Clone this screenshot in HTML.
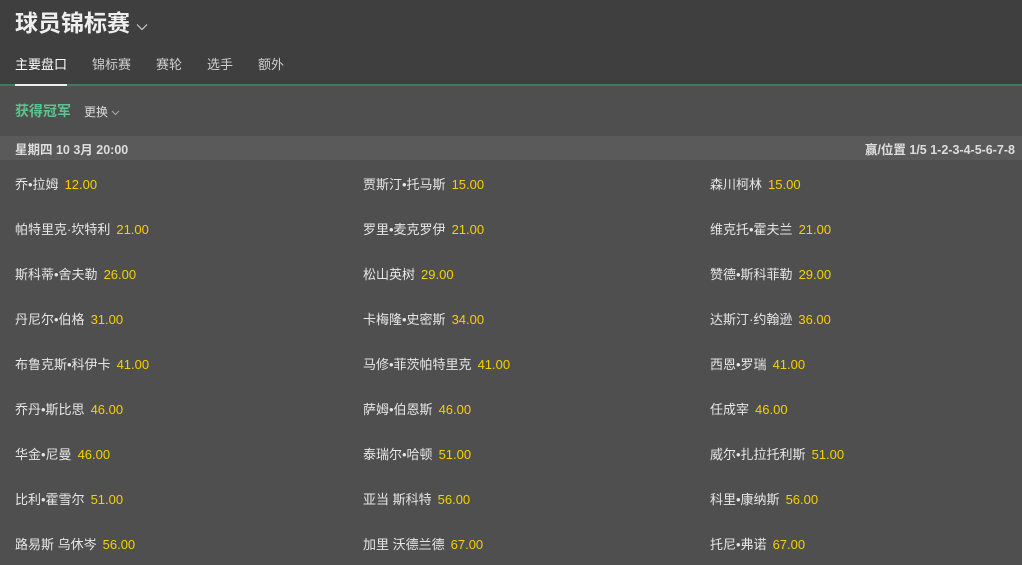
<!DOCTYPE html><html><head><meta charset="utf-8"><style>
body{margin:0;width:1022px;height:557px;overflow:hidden;background:#4f4f4f;font-family:"Liberation Sans","Noto Sans CJK SC",sans-serif;color:#e6e6e6}
.hd{background:#3f3f3f;height:84px;position:relative}
.t{position:absolute;left:15px;top:4px;font-size:23px;font-weight:bold;color:#eee}
.tabs{position:absolute;top:54px;left:15px;font-size:13px;color:#cfcfcf}
.tabs span{position:absolute;white-space:nowrap}
.line{height:2px;background:#3b7d62;position:relative}
.line i{position:absolute;left:15px;width:52px;height:2px;background:#eee;top:0}
.sub{height:50px;position:relative}
.g{position:absolute;left:15px;top:15px;font-size:14px;font-weight:bold;color:#5dc48f}
.c{position:absolute;left:84px;top:17px;font-size:12px;color:#ddd}
.dr{height:24px;background:#5a5a5a;font-size:12.5px;font-weight:bold;color:#ddd;position:relative}
.dr span{position:absolute;top:3px}
.row{height:45px;position:relative;font-size:13px}
.row span{position:absolute;top:14px;white-space:nowrap}
b{font-weight:normal;color:#f5d000;margin-left:6px}
</style></head><body>
<div class="hd"><div class="t">球员锦标赛 <svg width="12" height="8" viewBox="0 0 12 8"><path d="M1 1.5l5 5 5-5" fill="none" stroke="#ccc" stroke-width="1.2"/></svg></div>
<div class="tabs"><span style="left:0;color:#fff">主要盘口</span><span style="left:77px">锦标赛</span><span style="left:141px">赛轮</span><span style="left:192px">选手</span><span style="left:243px">额外</span></div></div>
<div class="line"><i></i></div>
<div class="sub"><span class="g">获得冠军</span><span class="c">更换 <svg width="9" height="6" viewBox="0 0 9 6"><path d="M1 1l3.5 3.5L8 1" fill="none" stroke="#aaa"/></svg></span></div>
<div class="dr"><span style="left:15px">星期四 10 3月 20:00</span><span style="right:7px">赢/位置 1/5 1-2-3-4-5-6-7-8</span></div>
<div class="row"><span style="left:15px">乔•拉姆<b>12.00</b></span><span style="left:363px">贾斯汀•托马斯<b>15.00</b></span><span style="left:710px">森川柯林<b>15.00</b></span></div>
<div class="row"><span style="left:15px">帕特里克·坎特利<b>21.00</b></span><span style="left:363px">罗里•麦克罗伊<b>21.00</b></span><span style="left:710px">维克托•霍夫兰<b>21.00</b></span></div>
<div class="row"><span style="left:15px">斯科蒂•舍夫勒<b>26.00</b></span><span style="left:363px">松山英树<b>29.00</b></span><span style="left:710px">赞德•斯科菲勒<b>29.00</b></span></div>
<div class="row"><span style="left:15px">丹尼尔•伯格<b>31.00</b></span><span style="left:363px">卡梅隆•史密斯<b>34.00</b></span><span style="left:710px">达斯汀·约翰逊<b>36.00</b></span></div>
<div class="row"><span style="left:15px">布鲁克斯•科伊卡<b>41.00</b></span><span style="left:363px">马修•菲茨帕特里克<b>41.00</b></span><span style="left:710px">西恩•罗瑞<b>41.00</b></span></div>
<div class="row"><span style="left:15px">乔丹•斯比思<b>46.00</b></span><span style="left:363px">萨姆•伯恩斯<b>46.00</b></span><span style="left:710px">任成宰<b>46.00</b></span></div>
<div class="row"><span style="left:15px">华金•尼曼<b>46.00</b></span><span style="left:363px">泰瑞尔•哈顿<b>51.00</b></span><span style="left:710px">威尔•扎拉托利斯<b>51.00</b></span></div>
<div class="row"><span style="left:15px">比利•霍雪尔<b>51.00</b></span><span style="left:363px">亚当 斯科特<b>56.00</b></span><span style="left:710px">科里•康纳斯<b>56.00</b></span></div>
<div class="row"><span style="left:15px">路易斯 乌休岑<b>56.00</b></span><span style="left:363px">加里 沃德兰德<b>67.00</b></span><span style="left:710px">托尼•弗诺<b>67.00</b></span></div>
</body></html>
